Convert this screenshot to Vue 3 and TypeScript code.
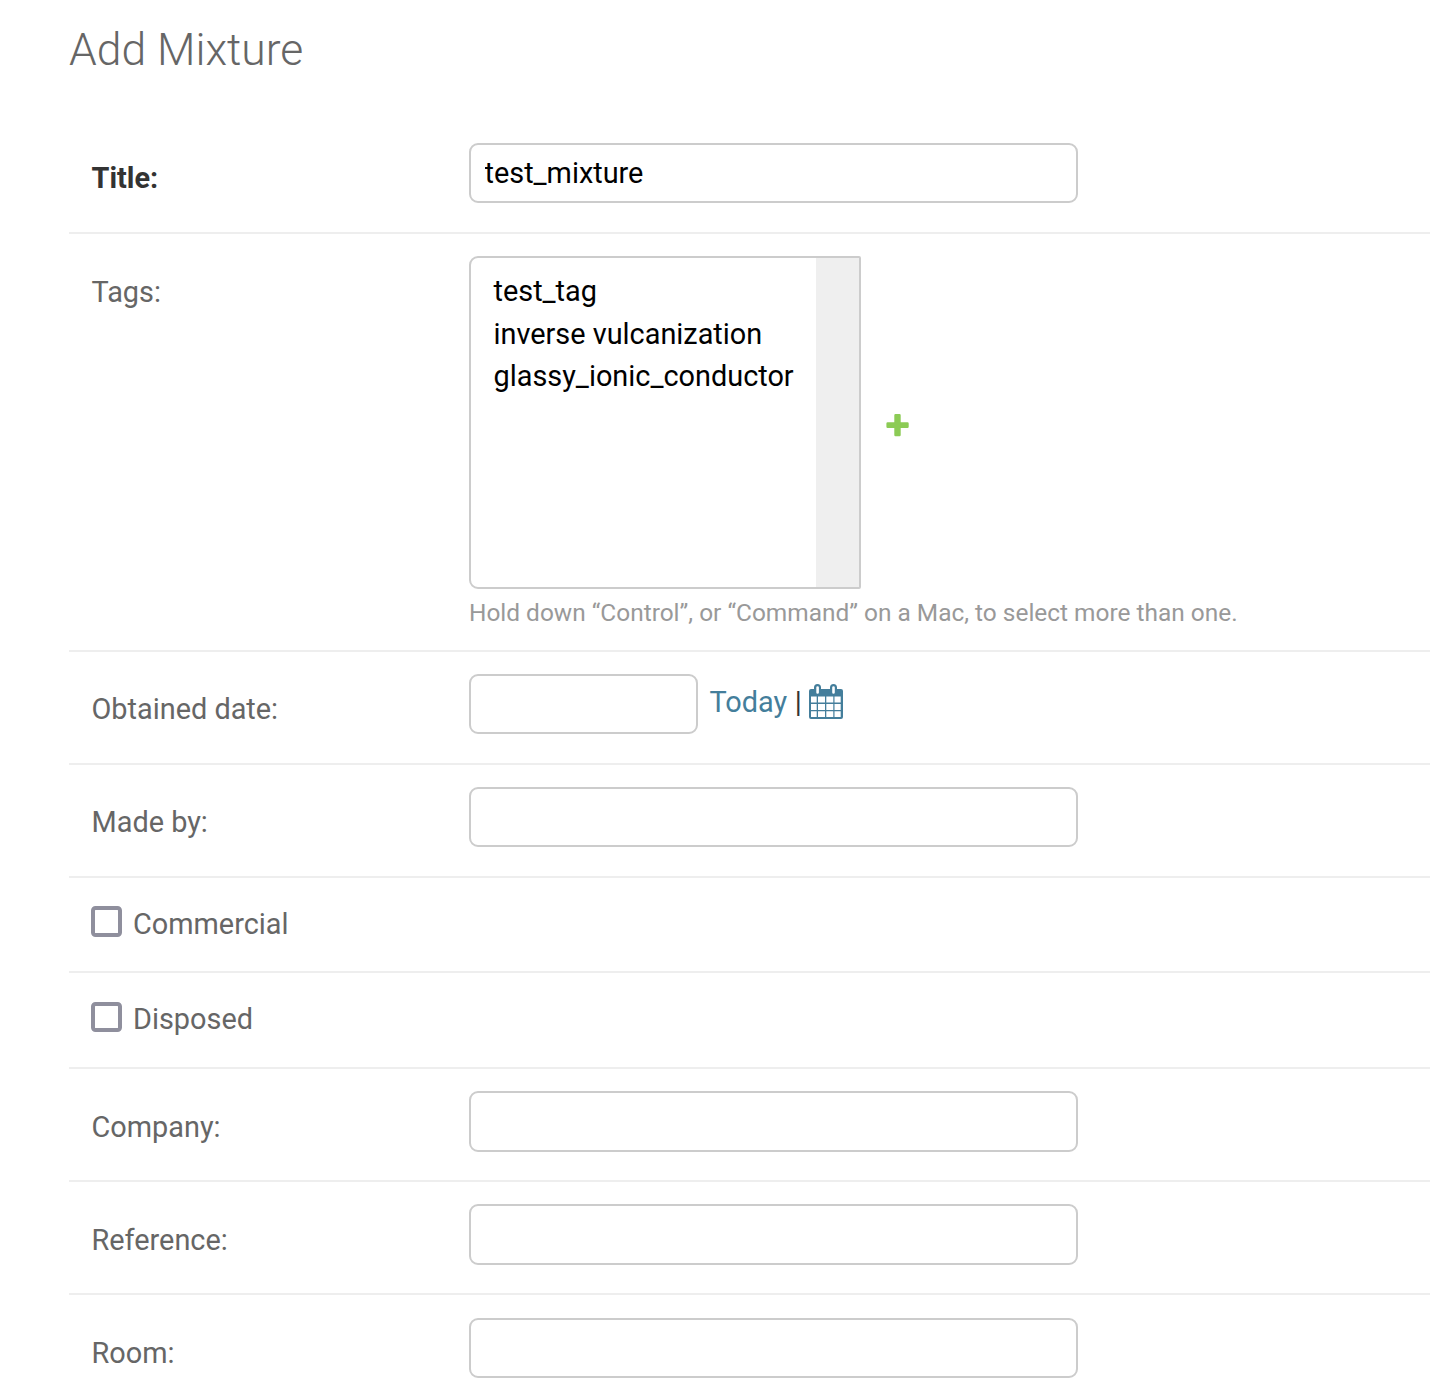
<script setup lang="ts">
import { ref } from 'vue'

interface Field {
  id: string
  label: string
  kind: 'text' | 'tags' | 'date' | 'check'
  height: number
  required?: boolean
}

const fields: Field[] = [
  { id: 'title', label: 'Title:', kind: 'text', height: 113, required: true },
  { id: 'tags', label: 'Tags:', kind: 'tags', height: 418 },
  { id: 'obtained', label: 'Obtained date:', kind: 'date', height: 113 },
  { id: 'made_by', label: 'Made by:', kind: 'text', height: 113 },
  { id: 'commercial', label: 'Commercial', kind: 'check', height: 95 },
  { id: 'disposed', label: 'Disposed', kind: 'check', height: 96 },
  { id: 'company', label: 'Company:', kind: 'text', height: 113 },
  { id: 'reference', label: 'Reference:', kind: 'text', height: 113 },
  { id: 'room', label: 'Room:', kind: 'text', height: 87 },
]

const tags: string[] = ['test_tag', 'inverse vulcanization', 'glassy_ionic_conductor']
const values = ref<Record<string, string>>({ title: 'test_mixture' })
const checks = ref<Record<string, boolean>>({})
</script>

<template>
  <main class="page">
    <h1>Add Mixture</h1>
    <form>
      <div
        v-for="f in fields"
        :key="f.id"
        class="row"
        :class="[f.kind, f.id]"
        :style="{ height: f.height + 'px' }"
      >
        <template v-if="f.kind === 'check'">
          <input :id="f.id" v-model="checks[f.id]" type="checkbox" class="box" />
          <label :for="f.id" class="check-label">{{ f.label }}</label>
        </template>
        <template v-else>
          <label :for="f.id" class="label" :class="{ required: f.required }">{{ f.label }}</label>
          <div v-if="f.kind === 'tags'" class="tags-field">
            <div class="select-line">
              <div class="select">
                <ul>
                  <li v-for="t in tags" :key="t">{{ t }}</li>
                </ul>
                <div class="track"></div>
              </div>
              <svg class="plus" width="23" height="23" viewBox="0 0 23 23">
                <path
                  fill="#8ccb55"
                  d="M9.500 0h4a1.200 1.200 0 0 1 1.200 1.200v7h6.800a1.200 1.200 0 0 1 1.200 1.200v3.400a1.200 1.200 0 0 1-1.200 1.200h-6.800v7a1.200 1.200 0 0 1-1.200 1.200h-4a1.200 1.200 0 0 1-1.200-1.200v-7H1.600A1.200 1.200 0 0 1 .4 12.800V9.400A1.200 1.200 0 0 1 1.600 8.200h6.700v-7A1.200 1.200 0 0 1 9.500 0z"
                />
              </svg>
            </div>
            <p class="help">Hold down “Control”, or “Command” on a Mac, to select more than one.</p>
          </div>
          <div v-else-if="f.kind === 'date'" class="date-field">
            <input :id="f.id" v-model="values[f.id]" type="text" class="input short" />
            <span class="shortcuts">
              <a class="today">Today</a><span class="bar">|</span>
              <svg class="cal" width="34" height="36" viewBox="0 0 34 36">
                <path
                  fill="#447e9b"
                  fill-rule="evenodd"
                  d="M2 5h3V3.500a3.500 3.500 0 0 1 7 0V5h9V3.500a3.500 3.500 0 0 1 7 0V5h4a2 2 0 0 1 2 2v26a2 2 0 0 1-2 2H2a2 2 0 0 1-2-2V7a2 2 0 0 1 2-2zM7.300 3.500v5a1.300 1.300 0 0 0 2.600 0v-5a1.300 1.300 0 0 0-2.600 0zM23.200 3.500v5a1.300 1.300 0 0 0 2.600 0v-5a1.300 1.300 0 0 0-2.600 0zM2 12.500v6h5.700v-6zM9 12.500v6h7v-6zM17.300 12.500v6h7v-6zM25.500 12.500v6h6.200v-6zM2 20v6h5.700v-6zM9 20v6h7v-6zM17.300 20v6h7v-6zM25.500 20v6h6.200v-6zM2 27.300v5.700h5.700v-5.700zM9 27.300v5.700h7v-5.700zM17.300 27.300v5.700h7v-5.700zM25.500 27.300v5.700h6.200v-5.700z"
                />
              </svg>
            </span>
          </div>
          <input v-else :id="f.id" v-model="values[f.id]" type="text" class="input" />
        </template>
      </div>
    </form>
  </main>
</template>

<style>
body {
  margin: 0;
  background: #fff;
}
html,
body {
  overflow: hidden;
}
</style>

<style scoped>
.page {
  box-sizing: border-box;
  height: 1382px;
  overflow: hidden;
  padding-left: 69px;
  font-family: Roboto, 'Liberation Sans', sans-serif;
  font-size: 28.870px;
  line-height: 36px;
  color: #333;
}
h1 {
  margin: 0;
  height: 121px;
  box-sizing: border-box;
  padding-top: 23px;
  font-size: 44.450px;
  line-height: 54px;
  font-weight: 300;
  color: #666;
}
.row {
  box-sizing: border-box;
  display: flex;
  align-items: flex-start;
  border-bottom: 2px solid #eee;
  padding: 22px 0 0 22.500px;
}
.row.room {
  border-bottom: 0;
  padding-top: 23px;
}
.label {
  flex: none;
  width: 377.500px;
  padding-top: 17px;
  color: #666;
}
.tags .label,
.company .label,
.reference .label {
  padding-top: 18px;
}
.label.required {
  font-weight: 700;
  color: #333;
}
.input {
  box-sizing: border-box;
  width: 609px;
  height: 60px;
  margin: 0;
  padding: 0 13.500px;
  border: 2px solid #ccc;
  border-radius: 9px;
  background: #fff;
  font: inherit;
  color: #000;
  outline: none;
}
.company .input,
.reference .input {
  height: 61px;
}
.input.short {
  width: 229px;
}
.select-line {
  display: flex;
  align-items: center;
}
.select {
  box-sizing: border-box;
  display: flex;
  width: 392px;
  height: 333px;
  border: 2px solid #ccc;
  border-radius: 9px 2px 2px 9px;
  color: #000;
}
.select ul {
  flex: 1;
  margin: 0;
  padding: 12px 0 0 22.500px;
  list-style: none;
}
.select li {
  height: 42.600px;
  line-height: 42.600px;
  white-space: nowrap;
}
.track {
  width: 43px;
  background: #efefef;
}
.plus {
  margin: 6px 0 0 25px;
}
.help {
  margin: 8px 0 0;
  font-size: 24.430px;
  line-height: 32px;
  color: #999;
}
.date-field {
  display: flex;
}
.shortcuts {
  display: flex;
  align-items: flex-start;
  margin-left: 11.500px;
  padding-top: 10px;
}
.today {
  color: #447e9b;
}
.bar {
  margin: 0 7.500px;
}
.box {
  appearance: none;
  flex: none;
  box-sizing: border-box;
  width: 31px;
  height: 31px;
  margin: 6px 11px 0 -0.500px;
  border: 4px solid #8f8f9d;
  border-radius: 4.500px;
}
.disposed .box {
  height: 30px;
  margin-top: 7px;
}
.check-label {
  padding-top: 6px;
  color: #666;
}
</style>
